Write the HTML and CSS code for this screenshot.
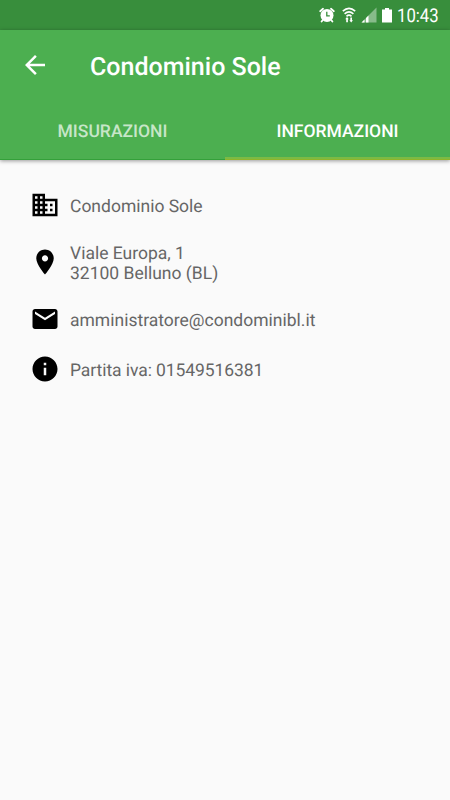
FILE: index.html
```
<!DOCTYPE html>
<html lang="it">
<head>
    <meta charset="UTF-8">
    <meta name="viewport" content="width=device-width, initial-scale=1.0">
    <title>Condominio Sole</title>
    <link rel="stylesheet" href="styles.css">
</head>
<body>

    <div class="status-bar">
        <!-- Alarm -->
        <svg class="status-alarm" width="16" height="16" viewBox="0 0 16 16">
            <circle cx="8" cy="8.4" r="6.500" fill="#fff"></circle>
            <path d="M1.200 4.200 4 1.800M14.800 4.200 12 1.800M3.600 13.200 2.600 14.500M12.400 13.200l1 1.300" stroke="#fff" stroke-width="1.800" stroke-linecap="round"></path>
            <path d="M7.800 4.800v4h3" fill="none" stroke="#388e3c" stroke-width="1.300"></path>
        </svg>
        <!-- Wifi -->
        <svg class="status-wifi" width="14" height="16" viewBox="0 0 14 16">
            <path d="M.8 4.200Q7-1.500 13.200 4.200M2.600 6.800Q7 2.800 11.400 6.800M4.500 9.300Q7 7 9.500 9.300" fill="none" stroke="#fff" stroke-width="1.600"></path>
            <path d="M5 10 6.800 12.300H5.900v2.900H4.200v-2.900H3.200zM9.200 15.600l-1.800-2.300h.9v-2.900h1.700v2.900h1z" fill="#fff"></path>
        </svg>
        <!-- Signal -->
        <svg class="status-signal" width="16" height="16" viewBox="0 0 16 16">
            <path d="M15.500.5v15H.5z" fill="#fff" fill-opacity=".4"></path>
            <path d="M3.500 12.500v3h-3zM7.500 8.500v7h-2.500v-4.500z" fill="#fff"></path>
        </svg>
        <!-- Battery -->
        <svg class="status-battery" width="10" height="16" viewBox="0 0 10 16">
            <path d="M3 1h4v1.500h3V15.500H0V2.500h3z" fill="#fff"></path>
        </svg>
        <span class="clock">10:43</span>
    </div>

    <header class="app-bar">
        <div class="toolbar">
            <svg class="icon" viewBox="0 0 24 24">
                <path d="M20 11H7.830l5.590-5.590L12 4l-8 8 8 8 1.410-1.410L7.830 13H20v-2z"></path>
            </svg>
            <h1 class="title">Condominio Sole</h1>
        </div>
        <nav class="tabs">
            <div class="tab">MISURAZIONI</div>
            <div class="tab active">INFORMAZIONI</div>
        </nav>
    </header>

    <main class="info-list">
        <div class="info-row">
            <svg class="icon" viewBox="0 0 24 24">
                <path d="M12 7V3H2v18h20V7H12zM6 19H4v-2h2v2zm0-4H4v-2h2v2zm0-4H4V9h2v2zm0-4H4V5h2v2zm4 12H8v-2h2v2zm0-4H8v-2h2v2zm0-4H8V9h2v2zm0-4H8V5h2v2zm10 12h-8v-2h2v-2h-2v-2h2v-2h-2V9h8v10zm-2-8h-2v2h2v-2zm0 4h-2v2h2v-2z"></path>
            </svg>
            <p class="info-text">Condominio Sole</p>
        </div>
        <div class="info-row address">
            <svg class="icon" viewBox="0 0 24 24">
                <path d="M12 2C8.130 2 5 5.130 5 9c0 5.250 7 13 7 13s7-7.750 7-13c0-3.870-3.130-7-7-7zm0 9.500c-1.380 0-2.500-1.120-2.500-2.500s1.120-2.500 2.500-2.500 2.500 1.120 2.500 2.500-1.120 2.500-2.500 2.500z"></path>
            </svg>
            <p class="info-text">Viale Europa, 1<br>32100 Belluno (BL)</p>
        </div>
        <div class="info-row">
            <svg class="icon" viewBox="0 0 24 24">
                <path d="M20 4H4c-1.100 0-1.990.9-1.990 2L2 18c0 1.100.9 2 2 2h16c1.100 0 2-.9 2-2V6c0-1.100-.9-2-2-2zm0 4l-8 5-8-5V6l8 5 8-5v2z"></path>
            </svg>
            <p class="info-text">amministratore@condominibl.it</p>
        </div>
        <div class="info-row">
            <svg class="icon" viewBox="0 0 24 24">
                <path d="M12 2C6.480 2 2 6.480 2 12s4.480 10 10 10 10-4.480 10-10S17.520 2 12 2zm1 15h-2v-6h2v6zm0-8h-2V7h2v2z"></path>
            </svg>
            <p class="info-text partita-iva">Partita iva: 01549516381</p>
        </div>
    </main>

</body>
</html>
```
FILE: styles.css
```
body {
    font-family: Roboto, sans-serif;
    text-rendering: geometricPrecision;
    background-color: #fafafa;
    color: #666666;
    margin: 0;
    height: 100vh;
    overflow: hidden;
}

.status-bar {
    display: flex;
    justify-content: flex-end;
    align-items: center;
    box-sizing: border-box;
    height: 30px;
    padding-right: 11px;
    background-color: #388e3c;
    color: #ffffff;
}

.status-wifi {
    margin-left: 7px;
}

.status-signal {
    margin-left: 5px;
}

.status-battery {
    margin-left: 5px;
}

.clock {
    width: 42px;
    margin-left: 5px;
    font-size: 19px;
    line-height: 30px;
    padding-top: 2px;
    white-space: nowrap;
    transform: scaleX(0.88);
    transform-origin: left;
}

.app-bar {
    position: relative;
    background-color: #4caf50;
    color: #ffffff;
    box-shadow: 0 1px 4px rgba(0, 0, 0, 0.4);
}

.toolbar {
    display: flex;
    align-items: center;
    height: 70px;
    padding-left: 20px;
}

.icon {
    flex: none;
    width: 30px;
    height: 30px;
    fill: #000000;
}

.toolbar .icon {
    fill: #ffffff;
}

.title {
    margin: 4px 0 0 40px;
    font-size: 25px;
    font-weight: 500;
}

.tabs {
    display: grid;
    grid-template-columns: 1fr 1fr;
    height: 60px;
}

.tab {
    display: flex;
    justify-content: center;
    align-items: center;
    padding-top: 4px;
    border-bottom: 1px solid #34a03a;
    font-size: 17.5px;
    font-weight: 500;
    color: rgba(255, 255, 255, 0.7);
}

.tab.active {
    color: #ffffff;
    border-bottom-color: #8fb52a;
    box-shadow: inset 0 -2px #7cba45;
}

.info-list {
    display: flex;
    flex-direction: column;
    gap: 20px;
    padding: 30px;
}

.info-row {
    display: flex;
    align-items: center;
    gap: 10px;
    height: 30px;
}

.info-row.address {
    height: 44px;
}

.info-text {
    margin: 0;
    padding-top: 4px;
    font-size: 17.5px;
    line-height: 20.5px;
}

.partita-iva {
    letter-spacing: -0.08px;
}
```
